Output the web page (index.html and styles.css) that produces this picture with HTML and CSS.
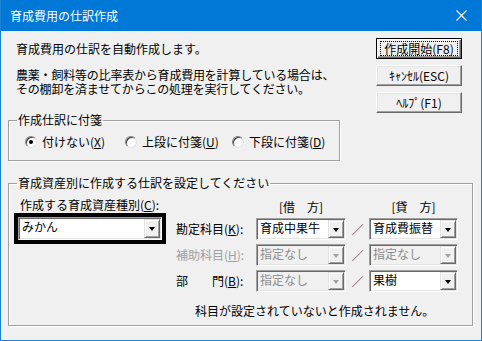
FILE: index.html
```html
<!DOCTYPE html>
<html lang="ja">
<head>
  <meta charset="UTF-8" />
  <title>育成費用の仕訳作成</title>
  <link rel="stylesheet" href="styles.css">
</head>
<body>

<div class="window">
  <div class="titlebar">
    <span class="title">育成費用の仕訳作成</span>
    <svg class="close" width="11" height="11" viewBox="0 0 11 11">
      <path d="M0.5 0.5L10.5 10.5M10.5 0.5L0.5 10.5" stroke="#fff" stroke-width="1.1" fill="none"/>
    </svg>
  </div>

  <div class="content">
    <div class="top">
      <div class="intro">
        <p class="lead">育成費用の仕訳を自動作成します。</p>
        <p class="notice">農薬・飼料等の比率表から育成費用を計算している場合は、</p>
        <p class="notice next">その棚卸を済ませてからこの処理を実行してください。</p>
      </div>
      <div class="buttons">
        <button class="btn default"><span class="focus">作成開始(F8)</span></button>
        <button class="btn">ｷｬﾝｾﾙ(ESC)</button>
        <button class="btn">ﾍﾙﾌﾟ(F1)</button>
      </div>
    </div>

    <fieldset class="group tag-group">
      <legend>作成仕訳に付箋</legend>
      <div class="radios">
        <label class="radio"><span class="mark checked"></span>付けない(<u>X</u>)</label>
        <label class="radio"><span class="mark"></span>上段に付箋(<u>U</u>)</label>
        <label class="radio"><span class="mark"></span>下段に付箋(<u>D</u>)</label>
      </div>
    </fieldset>

    <fieldset class="group entry-group">
      <legend>育成資産別に作成する仕訳を設定してください</legend>
      <div class="entry">
        <div class="asset">
          <div class="asset-label">作成する育成資産種別(<u>C</u>):</div>
          <div class="asset-frame">
            <div class="combo tall"><span class="value">みかん</span><span class="arrow"></span></div>
          </div>
        </div>

        <div class="accounts">
          <div></div>
          <div class="side">[借　方]</div>
          <div></div>
          <div class="side">[貸　方]</div>

          <div class="label">勘定科目(<u>K</u>):</div>
          <div class="combo"><span class="value">育成中果牛</span><span class="arrow"></span></div>
          <div class="slash">／</div>
          <div class="combo"><span class="value">育成費振替</span><span class="arrow"></span></div>

          <div class="label disabled">補助科目(<u>H</u>):</div>
          <div class="combo off"><span class="value">指定なし</span><span class="arrow"></span></div>
          <div class="slash">／</div>
          <div class="combo off"><span class="value">指定なし</span><span class="arrow"></span></div>

          <div class="label">部　　門(<u>B</u>):</div>
          <div class="combo off"><span class="value">指定なし</span><span class="arrow"></span></div>
          <div class="slash">／</div>
          <div class="combo"><span class="value">果樹</span><span class="arrow"></span></div>
        </div>
      </div>
      <p class="note">科目が設定されていないと作成されません。</p>
    </fieldset>
  </div>
</div>

</body>
</html>
```

FILE: styles.css
```css
* { box-sizing: border-box; }
body { margin: 0; font-family: "Noto Sans CJK JP", sans-serif; font-size: 12px; color: #000; }
p { margin: 0; }

.window { width: 482px; height: 341px; background: #f0f0f0; border: 1px solid #1883d7; border-top: none; }

.titlebar {
  height: 31px; background: #0078d7; color: #fff;
  display: flex; align-items: center; justify-content: space-between;
  padding: 0 14px 0 9px;
}
.title { font-size: 12px; line-height: 14px; }

.content { padding: 0 8px 0 7px; }

/* top text + buttons */
.top { height: 82px; display: flex; justify-content: space-between; }
.intro { padding-left: 8px; }
.lead { margin-top: 11px; line-height: 14px; }
.notice { margin-top: 12px; line-height: 14px; letter-spacing: -0.2px; }
.notice.next { margin-top: 0; }

.buttons { width: 86px; margin: 7px 11px 0 0; display: flex; flex-direction: column; gap: 6px; }
.btn {
  height: 21px; padding: 0; font: inherit; font-size: 12px; color: #000;
  background: #f0f0f0; border: 1px solid; border-color: #fff #696969 #696969 #fff;
  box-shadow: inset -1px -1px #a0a0a0, inset 1px 1px #e3e3e3;
}
.btn.default { border-color: #000; box-shadow: inset 1px 1px #fff, inset -1px -1px #696969, inset -2px -2px #a0a0a0; }
.focus { display: block; margin: 0 3px; border: 1px dotted #000; line-height: 13px; }

/* group boxes */
.group { margin: 0; min-width: 0; border: 1px solid #a0a0a0; box-shadow: 1px 1px #fff, inset 1px 1px #fff; }
.group legend { padding: 0 1px; line-height: 14px; }

.tag-group { width: 332px; padding: 8px 0 11px 8px; }
.radios { display: grid; grid-template-columns: 100px 107px auto; padding-left: 8px; line-height: 14px; }
.radio { display: flex; align-items: center; }
.mark {
  width: 12px; height: 12px; margin-right: 5px; border-radius: 50%; background: #fff;
  border: 1px solid; border-color: #808080 #e3e3e3 #e3e3e3 #808080;
  box-shadow: inset 1px 1px #404040;
  display: flex; align-items: center; justify-content: center;
}
.mark.checked::after { content: ""; width: 4px; height: 4px; border-radius: 50%; background: #000; }

.entry-group { margin-top: 15px; padding: 8px 0 7px 5px; }
.entry-group legend { margin-left: 3px; }
.entry { display: flex; gap: 10px; }

.asset { width: 152px; }
.asset-label { margin-left: 6px; line-height: 14px; }
.asset-frame { margin-top: 1px; border: 4px solid #000; }

.accounts {
  margin-top: 2px;
  display: grid; grid-template-columns: 80px 90px 23px 89px;
  grid-template-rows: 14px 22px 22px 22px; row-gap: 4px;
  align-items: center;
}
.side { text-align: center; line-height: 14px; }
.label { line-height: 14px; white-space: nowrap; }
.label.disabled { color: #a0a0a0; }
.slash { text-align: center; color: #555; }

/* combo boxes */
.combo {
  display: flex; height: 22px; background: #fff;
  border: 1px solid; border-color: #a0a0a0 #fff #fff #a0a0a0;
  box-shadow: inset 1px 1px #696969, inset -1px -1px #e3e3e3;
}
.combo.tall { height: 23px; }
.combo .value { flex: 1; padding-left: 3px; line-height: 17px; white-space: nowrap; }
.combo .arrow {
  width: 16px; margin: 1px 1px 1px 0; background: #f0f0f0;
  border: 1px solid; border-color: #e3e3e3 #696969 #696969 #e3e3e3;
  box-shadow: inset 1px 1px #fff, inset -1px -1px #a0a0a0;
  display: flex; align-items: center; justify-content: center;
}
.combo .arrow::after { content: ""; border: 3px solid transparent; border-top: 4px solid #000; border-bottom: none; margin-top: 1px; }
.combo.off { background: #f0f0f0; }
.combo.off .value { color: #8d8d8d; }
.combo.off .arrow::after { border-top-color: #a0a0a0; }

.note { margin: 12px 0 0 181px; line-height: 14px; }
```
